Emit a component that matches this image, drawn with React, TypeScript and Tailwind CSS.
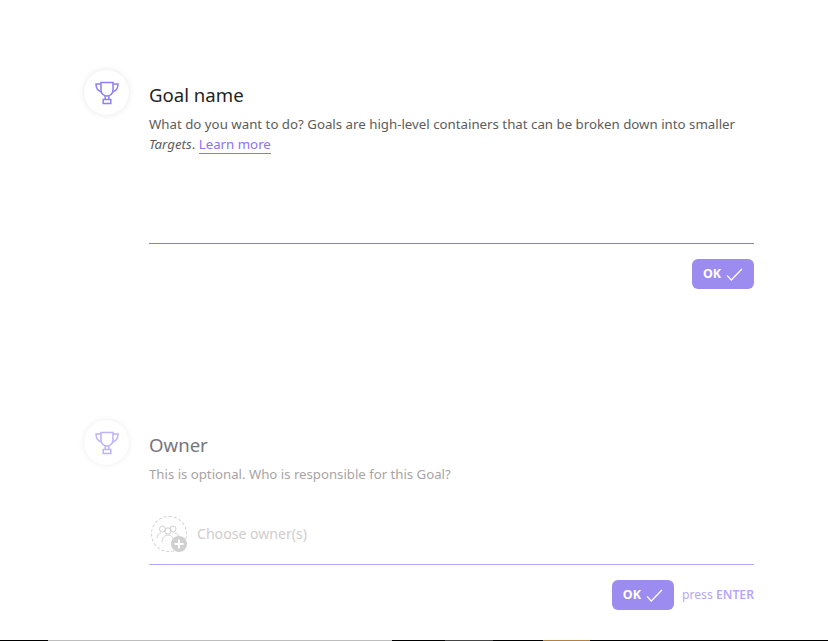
import React from 'react';

const font = "font-['Noto_Sans','Open_Sans',sans-serif]";

const Trophy: React.FC<{ className?: string }> = ({ className }) => (
  <svg viewBox="0 0 24 24" fill="none" stroke="currentColor" strokeWidth="1.5" className={className}>
    <path d="M6 1.500h12v7.500c0 3.400-2.600 6-6 6s-6-2.600-6-6V1.500z" />
    <path d="M6 3H1c0 4 1.600 7 5.600 8M18 3h5c0 4-1.600 7-5.600 8" />
    <path d="M10.200 15v3.500M13.800 15v3.500" />
    <rect x="8.200" y="18.500" width="7.600" height="4" />
  </svg>
);

const OkButton: React.FC = () => (
  <button className="w-[62px] h-[30px] rounded-md bg-[#9d8cf0] flex items-center justify-center gap-[5px] text-white text-[12.5px] font-bold">
    OK
    <svg viewBox="0 0 18 14" width="17" height="13" fill="none" stroke="currentColor" strokeWidth="1.4">
      <path d="M1 8l4.500 5L17 1" />
    </svg>
  </button>
);

const App: React.FC = () => {
  return (
    <div className={`${font} w-[828px] h-[641px] bg-white flex flex-col overflow-hidden`}>
      <div className="flex-1 pl-[84px] pr-[74px] pt-[70px]">
        <section className="flex gap-5 h-[350px]">
          <div className="w-[45px] h-[45px] rounded-full bg-white shadow-[0_0_6px_rgba(0,0,0,0.1)] flex items-center justify-center shrink-0 text-[#8f7ff5]">
            <Trophy className="w-6 h-6" />
          </div>
          <div className="flex-1">
            <h2 className="text-[18.600px] leading-[24px] mt-[13px] text-[#1f1f1f]">Goal name</h2>
            <p className="text-[13.270px] leading-[20px] mt-[7px] text-[#5c5c5c]">
              What do you want to do? Goals are high-level containers that can be broken down into smaller{' '}
              <em>Targets</em>. <span className="text-[#8b73f5] border-b border-[#8b73f5]">Learn more</span>
            </p>
            <div className="mt-[89px] border-b border-[#8a80b8]" />
            <div className="flex justify-end mt-[15px]">
              <OkButton />
            </div>
          </div>
        </section>

        <section className="flex gap-5">
          <div className="w-[45px] h-[45px] rounded-full bg-white shadow-[0_0_6px_rgba(0,0,0,0.08)] flex items-center justify-center shrink-0 text-[#bdb3f8]">
            <Trophy className="w-6 h-6" />
          </div>
          <div className="flex-1">
            <h2 className="text-[18.600px] leading-[24px] mt-[13px] text-[#77757c]">Owner</h2>
            <p className="text-[13.200px] leading-[20px] mt-[7px] text-[#a8a4a4]">
              This is optional. Who is responsible for this Goal?
            </p>
            <div className="flex items-center gap-[10px] mt-[32px] pb-[12px] pl-[2px] border-b border-[#b6a9f7]">
              <div className="relative w-[36px] h-[36px] rounded-full border border-dashed border-[#cfcfcf] flex items-start justify-center pt-[6px] pr-[3px] text-[#d0d0d0]">
                <svg viewBox="0 0 24 20" width="24" height="20" fill="none" stroke="currentColor" strokeWidth="1">
                  <circle cx="6.500" cy="6" r="3" />
                  <circle cx="17" cy="6" r="3" />
                  <circle cx="12" cy="8" r="3.200" />
                  <path d="M1 15c0-3 2-5 4-5M23 15c0-3-2-5-4-5M6 19c0-4 2.500-7 6-7s6 3 6 7" />
                </svg>
                <div className="absolute right-[-1px] bottom-[-1px] w-4 h-4 rounded-full bg-[#d0d0d0] flex items-center justify-center">
                  <svg viewBox="0 0 10 10" width="10" height="10" stroke="#fff" strokeWidth="1.800">
                    <path d="M5 0.500v9M0.500 5h9" />
                  </svg>
                </div>
              </div>
              <span className="text-[14.100px] text-[#d0cdcd]">Choose owner(s)</span>
            </div>
            <div className="flex justify-end items-center gap-2 mt-[15px]">
              <OkButton />
              <span className="text-[12.200px] text-[#b6a9f7]">
                press <span className="font-semibold">ENTER</span>
              </span>
            </div>
          </div>
        </section>
      </div>

      {/* strip of the window behind, along the bottom edge */}
      <div className="h-px flex shrink-0 bg-black">
        <div className="w-[48px]" />
        <div className="w-[344px] bg-[#bdbdbd]" />
        <div className="w-[53px]" />
        <div className="w-[48px] bg-[#444]" />
        <div className="w-[50px]" />
        <div className="w-[47px] bg-[#b5813f]" />
      </div>
    </div>
  );
};

export default App;
